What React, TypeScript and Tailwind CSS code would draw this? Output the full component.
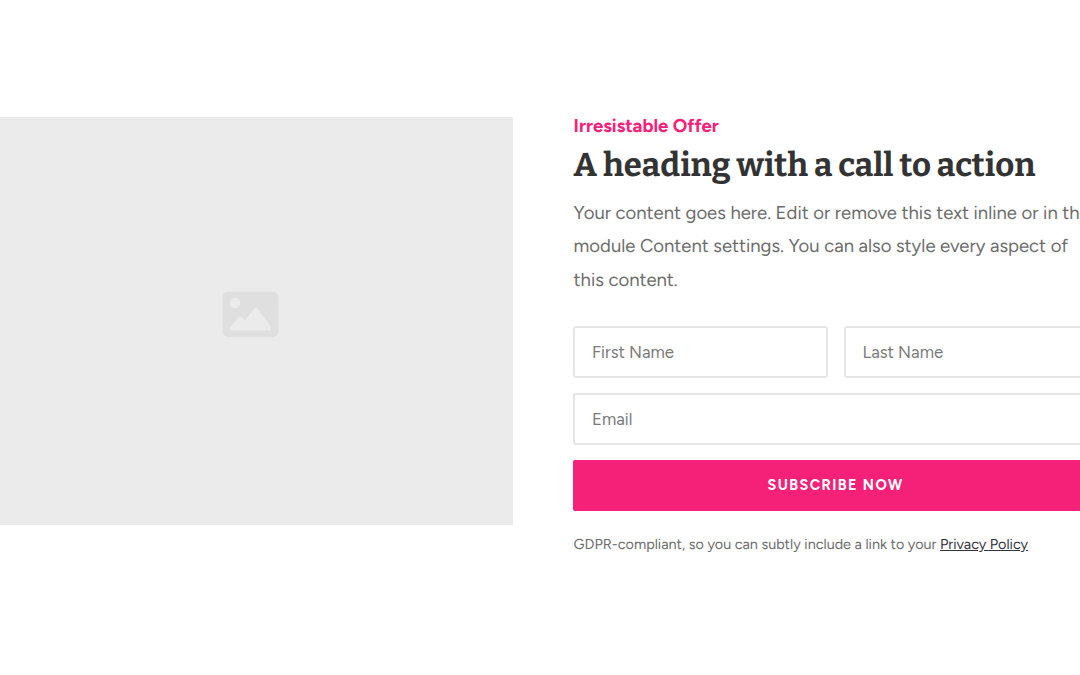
function ImagePlaceholder() {
  return (
    <div className="flex h-[408px] w-[513px] shrink-0 items-center bg-[#ebebeb] pl-[222px]">
      <svg className="mb-[14px] h-[46px] w-[57px]" viewBox="0 0 57 46" aria-hidden="true">
        <rect x="0.5" y="0.5" width="56" height="45.5" rx="6" fill="#dfdfdf" />
        <circle cx="13" cy="12" r="5.2" fill="#ebebeb" />
        <path
          d="M8 36.6 L16.7 26.1 Q18 24.7 19.3 26.1 L22.6 29.8 L33 16.7 Q34 15.6 35 16.7 L49 36.4 Q49.7 39.6 47.5 39.6 H9.5 Q7 39.4 8 36.6Z"
          fill="#ebebeb"
        />
      </svg>
    </div>
  );
}

function TextField({ label }: { label: string }) {
  return (
    <input
      type="text"
      placeholder={label}
      aria-label={label}
      className="h-[52px] w-full min-w-0 rounded-[3px] border-2 border-[#e6e6e6] bg-white px-[17px] text-[16.8px] text-[#7a7a7a] outline-none placeholder:text-[#7a7a7a]"
    />
  );
}

export default function App() {
  return (
    <main className="h-[675px] w-full overflow-hidden bg-white font-['Figtree','Lato',sans-serif] [text-rendering:geometricPrecision]">
      <section className="flex w-[1098px] items-start gap-[60px] pt-[117px]">
        <ImagePlaceholder />

        <div className="w-[525px] shrink-0 pl-[0.6px]">
          <p className="h-[18px] text-[18.5px] leading-[18px] font-bold whitespace-nowrap text-[#f72079]">
            Irresistable Offer
          </p>
          <h1 className="mt-[8px] h-[44px] font-['Bitter','DejaVu_Serif',serif] text-[32.9px] leading-[44px] font-bold whitespace-nowrap text-[#333]">
            A heading with a call to action
          </h1>
          <p className="mt-[9px] text-[18.5px] leading-[33.3px] whitespace-nowrap text-[#6c6c6c]">
            <span className="block">Your content goes here. Edit or remove this text inline or in the</span>
            <span className="block">module Content settings. You can also style every aspect of</span>
            <span className="block">this content.</span>
          </p>

          <form className="mt-[30.3px] -ml-[0.6px] flex flex-col gap-[15px]">
            <div className="grid grid-cols-2 gap-[16px]">
              <TextField label="First Name" />
              <TextField label="Last Name" />
            </div>
            <TextField label="Email" />
            <button
              type="button"
              className="h-[51px] rounded-[2px] bg-[#f52179] pt-px text-[14.4px] font-bold tracking-[1.44px] text-white uppercase"
            >
              Subscribe now
            </button>
          </form>

          <p className="mt-[21px] text-[14.4px] leading-[24px] whitespace-nowrap text-[#6c6c6c]">
            GDPR-compliant, so you can subtly include a link to your{' '}
            <a href="#" className="text-[#333340] underline">Privacy Policy</a>
          </p>
        </div>
      </section>
    </main>
  );
}
